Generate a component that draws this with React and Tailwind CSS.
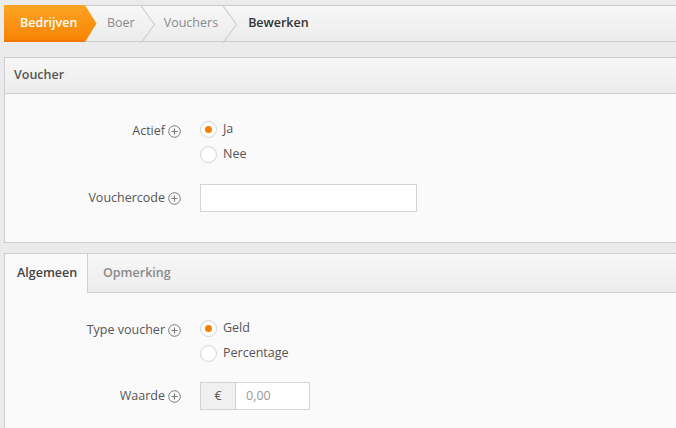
import React from "react";

const font = { fontFamily: '"Open Sans", "Noto Sans", sans-serif' };

function PlusCircle() {
  return (
    <svg width="13" height="13" viewBox="0 0 13 13" className="shrink-0">
      <circle cx="6.5" cy="6.5" r="5.8" fill="none" stroke="#7a7a7a" strokeWidth="1" />
      <path d="M6.5 3.4v6.2M3.4 6.5h6.2" stroke="#7a7a7a" strokeWidth="1.1" />
    </svg>
  );
}

function Chevron() {
  return (
    <svg width="16" height="37" viewBox="0 0 16 37" className="shrink-0 -ml-[1px]">
      <polyline points="1,0 14.5,18.5 1,37" fill="none" stroke="#cfcfcf" strokeWidth="1.2" />
    </svg>
  );
}

function Radio({ checked, label }) {
  return (
    <label className="flex items-center gap-[6px] h-[25px]">
      <span className="w-[17px] h-[17px] rounded-full border border-[#d4d4d4] bg-white flex items-center justify-center shadow-[inset_0_1px_1px_rgba(0,0,0,0.04)]">
        {checked && <span className="w-[7px] h-[7px] rounded-full bg-[#f77f00]" />}
      </span>
      <span className="text-[12.5px] text-[#555]">{label}</span>
    </label>
  );
}

function FieldLabel({ children, top }) {
  return (
    <div
      className={
        "w-[176px] shrink-0 flex items-center justify-end gap-[3px] text-[12.5px] text-[#555] " +
        (top ? "h-[25px] pt-[3px]" : "")
      }
    >
      <span>{children}</span>
      <PlusCircle />
    </div>
  );
}

export default function App() {
  return (
    <div className="min-h-[428px] bg-[#ebebeb] pt-[5px] pl-[4px] overflow-hidden" style={font}>
      {/* breadcrumb */}
      <div className="h-[37px] flex items-stretch border-y border-[#cbcbcb] bg-gradient-to-b from-[#f7f7f7] to-[#ececec]">
        <div className="relative flex items-center pl-[16px] bg-gradient-to-b from-[#fba423] to-[#f78200] text-white font-semibold text-[12.5px] w-[81px] -my-[1px] shadow-[inset_0_-2px_0_#f07800]">
          Bedrijven
          <svg width="13" height="37" viewBox="0 0 13 37" className="absolute left-[80px] top-0">
            <defs>
              <linearGradient id="tipfill" x1="0" y1="0" x2="0" y2="1">
                <stop offset="0" stopColor="#fba423" />
                <stop offset="1" stopColor="#f78200" />
              </linearGradient>
            </defs>
            <polygon points="0,0 1,0 12.5,18.5 1,37 0,37" fill="url(#tipfill)" />
          </svg>
        </div>
        <div className="flex items-center pl-[22px] pr-[6px] text-[12.5px] text-[#8a8a8a]">Boer</div>
        <Chevron />
        <div className="flex items-center pl-[8px] pr-[5px] text-[12.5px] text-[#8a8a8a]">Vouchers</div>
        <Chevron />
        <div className="flex items-center pl-[10px] text-[12.5px] font-semibold text-[#333]">Bewerken</div>
      </div>

      {/* voucher panel */}
      <div className="mt-[15px] border border-r-0 border-[#cfcfcf] bg-[#fafafa]">
        <div className="h-[36px] flex items-center pl-[9px] border-b border-[#cfcfcf] bg-gradient-to-b from-[#f7f7f7] to-[#ececec] text-[12.5px] font-semibold text-[#555]">
          Voucher
        </div>
        <div className="pt-[23px] pb-[30px]">
          <div className="flex items-start">
            <FieldLabel top>Actief</FieldLabel>
            <div className="ml-[19px] flex flex-col">
              <Radio checked label="Ja" />
              <Radio label="Nee" />
            </div>
          </div>
          <div className="flex items-center mt-[17px]">
            <FieldLabel>Vouchercode</FieldLabel>
            <div className="ml-[19px] w-[217px] h-[28px] border border-[#d4d4d4] bg-white" />
          </div>
        </div>
      </div>

      {/* tabbed panel */}
      <div className="mt-[10px] border border-r-0 border-[#cfcfcf] bg-[#fafafa]">
        <div className="h-[39px] flex bg-gradient-to-b from-[#f7f7f7] to-[#ececec]">
          <div className="w-[83px] flex items-center pl-[12px] bg-[#fafafa] border-r border-[#cfcfcf] text-[12.5px] font-semibold text-[#444]">
            Algemeen
          </div>
          <div className="flex-1 flex items-center pl-[15px] border-b border-[#cfcfcf] text-[12.5px] font-semibold text-[#8a8a8a]">
            Opmerking
          </div>
        </div>
        <div className="pt-[23px] pb-[20px]">
          <div className="flex items-start">
            <FieldLabel top>Type voucher</FieldLabel>
            <div className="ml-[19px] flex flex-col">
              <Radio checked label="Geld" />
              <Radio label="Percentage" />
            </div>
          </div>
          <div className="flex items-center mt-[16px]">
            <FieldLabel>Waarde</FieldLabel>
            <div className="ml-[19px] flex h-[28px] w-[110px] border border-[#d4d4d4] bg-white">
              <div className="w-[35px] flex items-center justify-center bg-[#f0f0f0] border-r border-[#d4d4d4] text-[12.5px] text-[#555]">€</div>
              <div className="flex-1 flex items-center pl-[10px] text-[12.5px] text-[#999]">0,00</div>
            </div>
          </div>
        </div>
      </div>
    </div>
  );
}
